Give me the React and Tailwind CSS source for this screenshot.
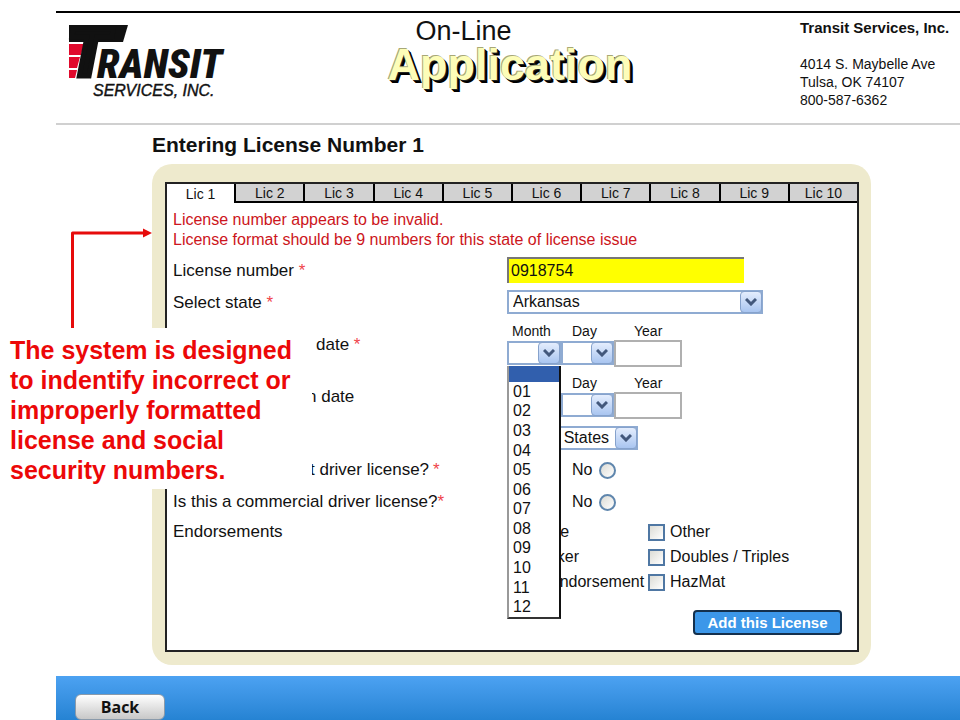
import { useState } from 'react';

const TABS = [1, 2, 3, 4, 5, 6, 7, 8, 9, 10];
const MONTHS = ['01', '02', '03', '04', '05', '06', '07', '08', '09', '10', '11', '12'];

function Logo() {
  return (
    <svg className="overflow-visible" width="156" height="80" viewBox="0 0 156 80" role="img" aria-label="Transit Services, Inc.">
      <g fill="#e0092c">
        <path d="M1 20h15l-3 11H1z" />
        <path d="M1 33h11l-3 11H1z" />
        <path d="M1 46h8l-2 8H1z" />
      </g>
      <path d="M1 1h59l-5 17H1z" fill="#111" />
      <text x="-1" y="52" fontFamily="Liberation Sans" fontWeight="700" fontStyle="italic" fontSize="68" fill="#111" stroke="#111" strokeWidth="5">T</text>
      <text x="29" y="54" fontFamily="Roboto Condensed, Roboto" fontWeight="900" fontStyle="italic" fontSize="41" fill="#111" stroke="#fff" strokeWidth="3" paintOrder="stroke">RANSIT</text>
      <text x="25" y="72" fontFamily="Liberation Sans" fontStyle="italic" fontSize="16" fill="#111" stroke="#111" strokeWidth="0.4">SERVICES, INC.</text>
    </svg>
  );
}

function Select({ label, className, options }) {
  return (
    <div className={`relative h-6 ${className}`}>
      <select
        aria-label={label}
        className="h-full w-full appearance-none border-2 border-[#8fabd2] bg-white pl-1 text-base leading-5 outline-none"
      >
        {options.map((o) => (
          <option key={o}>{o}</option>
        ))}
      </select>
      <span className="pointer-events-none absolute inset-y-px right-px flex w-[22px] items-center justify-center rounded-sm border border-[#86a2cc] bg-linear-to-b from-[#e4edfd] to-[#a9c5f0]">
        <svg width="12" height="8" viewBox="0 0 12 8" fill="none" stroke="#43587c" strokeWidth="3">
          <path d="M1 1l5 5 5-5" />
        </svg>
      </span>
    </div>
  );
}

function Star() {
  return <span className="text-[#f0444a]">*</span>;
}

function DateFields({ name, open }) {
  return (
    <div className="pt-[5px] pb-[3px]">
      <div className="flex h-4 text-sm leading-4">
        <span className="w-[65px] pl-[5px]">{open && 'Month'}</span>
        <span className="w-[62px]">Day</span>
        <span>Year</span>
      </div>
      <div className="flex h-7 items-center">
        <div className="relative">
          <Select label={`${name} month`} className="w-[54px]" options={['', ...MONTHS]} />
          {open && (
            <ul
              role="listbox"
              aria-label="Months"
              className="absolute top-[25px] left-0 z-10 flex h-[253px] w-[54px] flex-col border-r-2 border-b-2 border-l-2 border-r-[#111] border-b-[#333] border-l-[#999] bg-white text-base leading-5"
            >
              <li role="option" aria-selected="true" className="h-4 shrink-0 bg-[#315fad]" />
              {MONTHS.map((m) => (
                <li key={m} role="option" aria-selected="false" className="flex min-h-0 flex-1 items-center pl-1">
                  {m}
                </li>
              ))}
            </ul>
          )}
        </div>
        <Select label={`${name} day`} className="w-[53px]" options={['']} />
        <input aria-label={`${name} year`} className="h-[27px] w-[68px] border-2 border-[#b0b0b0] bg-white px-1" />
      </div>
    </div>
  );
}

function NoRadio({ name }) {
  return (
    <label className="flex items-center gap-[7px] pl-[65px] text-base">
      No
      <input
        type="radio"
        name={name}
        className="size-[17px] appearance-none rounded-full border-2 border-[#5f86ad] bg-linear-to-br from-[#dcdcd6] to-white"
      />
    </label>
  );
}

function Endorsement({ left, right, indent }) {
  return (
    <div className="flex h-6 items-center text-base">
      <span className={`w-[141px] whitespace-nowrap ${indent}`}>{left}</span>
      <label className="flex items-center gap-[5px]">
        <input
          type="checkbox"
          className="size-[17px] appearance-none border-2 border-[#4f77a3] bg-linear-to-br from-[#dcdcd6] to-white"
        />
        {right}
      </label>
    </div>
  );
}

export default function App() {
  const [active, setActive] = useState(1);
  const [number, setNumber] = useState('0918754');

  return (
    <div className="relative min-h-screen overflow-hidden bg-white pt-[11px] font-['Liberation_Sans',Arial,sans-serif] text-[#111]">
      <div className="ml-14">
        <header className="flex h-[114px] justify-between border-t-2 border-b-2 border-t-black border-b-[#d0d0d0]">
          <div className="pt-[11px] pl-3">
            <Logo />
          </div>
          <h1 className="pt-1 pr-1">
            <span className="block pl-7 text-[27px] leading-7">On-Line</span>
            <span className="block text-[45px] leading-10 font-bold text-[#fdfdb8] [text-shadow:-1px_-1px_0_#a8a878,1px_1px_0_#222,2px_2px_0_#000,3px_3px_0_#000]">
              Application
            </span>
          </h1>
          <address className="w-[160px] pt-1.5 text-sm leading-[18px] whitespace-nowrap not-italic">
            <strong className="mb-[18px] block text-[15px]">Transit Services, Inc.</strong>
            4014 S. Maybelle Ave
            <br />
            Tulsa, OK 74107
            <br />
            800-587-6362
          </address>
        </header>

        <main className="mr-[89px] ml-24 pt-1.5">
          <h2 className="text-[21px] leading-7 font-bold">Entering License Number {active}</h2>

          <section className="mt-[5px] rounded-[20px] bg-[#eeeacd] pt-[18px] pr-3 pb-[13px] pl-[13px]">
            <form className="border-2 border-[#222] bg-white" onSubmit={(e) => e.preventDefault()}>
              {/* Tabs */}
              <div className="flex" role="tablist">
                {TABS.map((n) => (
                  <button
                    key={n}
                    type="button"
                    role="tab"
                    aria-selected={active === n}
                    onClick={() => setActive(n)}
                    className={`h-[19px] flex-1 border-b-2 text-sm leading-4 ${n > 1 ? 'border-l-2 border-l-black' : ''} ${
                      active === n ? 'border-b-white bg-white pt-0.5' : 'border-b-black bg-[#d2d2d2]'
                    }`}
                  >
                    Lic {n}
                  </button>
                ))}
              </div>

              <div className="pt-[7px] pr-[15px] pb-[15px] pl-1.5">
                <p className="mb-1 text-base leading-5 text-[#cc1520]">
                  License number appears to be invalid.
                  <br />
                  License format should be 9 numbers for this state of license issue
                </p>

                <div className="grid grid-cols-[334px_1fr] items-center text-[17px] leading-5">
                  <label htmlFor="license-number" className="pt-0.5">
                    License number <Star />
                  </label>
                  <div className="flex h-8 items-center">
                    <input
                      id="license-number"
                      value={number}
                      onChange={(e) => setNumber(e.target.value)}
                      className="h-[26px] w-[237px] border-t-2 border-l-2 border-[#777] bg-[#ffff00] px-0.5 text-base outline-none"
                    />
                  </div>

                  <span className="pt-0.5">
                    Select state <Star />
                  </span>
                  <div className="flex h-8 items-center">
                    <Select label="Select state" className="w-[256px]" options={['Arkansas']} />
                  </div>

                  <span className="pt-0.5 pl-[143px]">
                    date <Star />
                  </span>
                  <DateFields name="Issue" open />

                  <span className="pt-0.5 pl-[134px]">n date</span>
                  <DateFields name="Expiration" />

                  <span />
                  <div className="flex h-8 items-center">
                    <Select label="Country" className="w-[131px]" options={['United States']} />
                  </div>

                  <span className="flex h-8 items-center gap-1 pl-[137px]">
                    t driver license? <Star />
                  </span>
                  <NoRadio name="current" />

                  <span className="flex h-8 items-center">
                    Is this a commercial driver license?
                    <Star />
                  </span>
                  <NoRadio name="commercial" />

                  <span className="self-start pt-1">Endorsements</span>
                  <div className="flex flex-col gap-px pt-0.5">
                    <Endorsement left="None" right="Other" indent="pl-6" />
                    <Endorsement left="Tanker" right="Doubles / Triples" indent="pl-6" />
                    <Endorsement left="Endorsement" right="HazMat" indent="pl-[42px]" />
                  </div>
                </div>

                <div className="mt-4 flex justify-end">
                  <button
                    type="submit"
                    className="h-[25px] w-[149px] rounded border-2 border-[#14304d] bg-[#3c97e9] text-[15px] leading-5 font-bold text-white"
                  >
                    Add this License
                  </button>
                </div>
              </div>
            </form>
          </section>
        </main>

        <footer className="mt-[11px] h-11 overflow-hidden bg-linear-to-b from-[#4ca2f2] to-[#2583d3] pt-[18px] pl-[19px]">
          <button
            type="button"
            className="h-[26px] w-[90px] rounded-md border border-[#8a9aaa] bg-linear-to-b from-white to-[#c8c8c8] font-['Open_Sans',sans-serif] text-base leading-6 font-bold"
          >
            Back
          </button>
        </footer>
      </div>

      {/* Callout over the form */}
      <svg className="absolute top-[226px] left-[70px]" width="84" height="102" viewBox="0 0 84 102">
        <path d="M2.500 102V7h73" fill="none" stroke="#e60b0b" strokeWidth="3" strokeLinejoin="round" />
        <path d="M73 2.500L82 7l-9 4.500z" fill="#e60b0b" />
      </svg>
      <p className="absolute top-[328px] left-0 z-20 h-[161px] w-[312px] bg-white pt-[7px] pl-2.5 text-[25px] leading-[30px] font-bold whitespace-nowrap text-[#ec0808]">
        The system is designed
        <br />
        to indentify incorrect or
        <br />
        improperly formatted
        <br />
        license and social
        <br />
        security numbers.
      </p>
    </div>
  );
}
